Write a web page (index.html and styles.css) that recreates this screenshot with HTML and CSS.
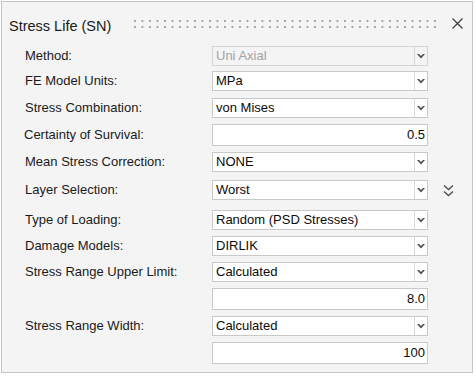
FILE: index.html
```html
<!DOCTYPE html>
<html>
<head>
<meta charset="utf-8">
<link rel="stylesheet" href="styles.css">
</head>
<body>
<div class="panel">
  <div class="header">
    <span class="title">Stress Life (SN)</span>
    <svg class="grip" width="302" height="8" viewBox="0 0 302 8">
      <defs>
        <pattern id="dots" x="0" y="0" width="7.5" height="6" patternUnits="userSpaceOnUse">
          <rect x="0" y="0" width="2" height="2" fill="#a4a4a4"/>
        </pattern>
      </defs>
      <rect x="0" y="0" width="302" height="8" fill="url(#dots)"/>
    </svg>
    <svg class="close" width="11" height="11" viewBox="0 0 11 11">
      <path d="M0.5 0.5 L10.5 10.5 M10.5 0.5 L0.5 10.5" stroke="#3c3c3c" stroke-width="1.2" fill="none"/>
    </svg>
  </div>

  <div class="form">
    <div class="row">
      <span class="label">Method:</span>
      <div class="combo disabled"><span class="val">Uni Axial</span><span class="btn"><svg width="8" height="5" viewBox="0 0 8 5"><path d="M0 0 L2 0 L4 2 L6 0 L8 0 L4 4.5 Z" fill="#4a4a4a"/></svg></span></div>
    </div>
    <div class="row g5">
      <span class="label">FE Model Units:</span>
      <div class="combo"><span class="val">MPa</span><span class="btn"><svg width="8" height="5" viewBox="0 0 8 5"><path d="M0 0 L2 0 L4 2 L6 0 L8 0 L4 4.5 Z" fill="#4a4a4a"/></svg></span></div>
    </div>
    <div class="row g7">
      <span class="label">Stress Combination:</span>
      <div class="combo"><span class="val">von Mises</span><span class="btn"><svg width="8" height="5" viewBox="0 0 8 5"><path d="M0 0 L2 0 L4 2 L6 0 L8 0 L4 4.5 Z" fill="#4a4a4a"/></svg></span></div>
    </div>
    <div class="row tall">
      <span class="label shift">Certainty of Survival:</span>
      <div class="input">0.5</div>
    </div>
    <div class="row">
      <span class="label">Mean Stress Correction:</span>
      <div class="combo"><span class="val">NONE</span><span class="btn"><svg width="8" height="5" viewBox="0 0 8 5"><path d="M0 0 L2 0 L4 2 L6 0 L8 0 L4 4.5 Z" fill="#4a4a4a"/></svg></span></div>
    </div>
    <div class="row g8">
      <span class="label">Layer Selection:</span>
      <div class="combo"><span class="val">Worst</span><span class="btn"><svg width="8" height="5" viewBox="0 0 8 5"><path d="M0 0 L2 0 L4 2 L6 0 L8 0 L4 4.5 Z" fill="#4a4a4a"/></svg></span></div>
      <svg class="expand" width="11" height="13" viewBox="0 0 11 13">
        <path d="M1 1.5 L5.5 5.5 L10 1.5 M1 7.5 L5.5 11.5 L10 7.5" stroke="#505050" stroke-width="1.4" fill="none"/>
      </svg>
    </div>
    <div class="row g10">
      <span class="label">Type of Loading:</span>
      <div class="combo"><span class="val">Random (PSD Stresses)</span><span class="btn"><svg width="8" height="5" viewBox="0 0 8 5"><path d="M0 0 L2 0 L4 2 L6 0 L8 0 L4 4.5 Z" fill="#4a4a4a"/></svg></span></div>
    </div>
    <div class="row">
      <span class="label">Damage Models:</span>
      <div class="combo"><span class="val">DIRLIK</span><span class="btn"><svg width="8" height="5" viewBox="0 0 8 5"><path d="M0 0 L2 0 L4 2 L6 0 L8 0 L4 4.5 Z" fill="#4a4a4a"/></svg></span></div>
    </div>
    <div class="row">
      <span class="label">Stress Range Upper Limit:</span>
      <div class="combo"><span class="val">Calculated</span><span class="btn"><svg width="8" height="5" viewBox="0 0 8 5"><path d="M0 0 L2 0 L4 2 L6 0 L8 0 L4 4.5 Z" fill="#4a4a4a"/></svg></span></div>
    </div>
    <div class="row tall">
      <span class="label"></span>
      <div class="input">8.0</div>
    </div>
    <div class="row">
      <span class="label">Stress Range Width:</span>
      <div class="combo"><span class="val">Calculated</span><span class="btn"><svg width="8" height="5" viewBox="0 0 8 5"><path d="M0 0 L2 0 L4 2 L6 0 L8 0 L4 4.5 Z" fill="#4a4a4a"/></svg></span></div>
    </div>
    <div class="row tall">
      <span class="label"></span>
      <div class="input">100</div>
    </div>
  </div>
</div>
</body>
</html>
```

FILE: styles.css
```css
html, body {
  margin: 0;
  padding: 0;
  background: #ffffff;
}

body {
  font-family: "Liberation Sans", Arial, sans-serif;
  color: #1f1f1f;
}

.panel {
  margin: 1px 0 0 1px;
  width: 470px;
  height: 370px;
  border: 1px solid #c6c6c6;
  background: #f4f4f4;
}

.header {
  display: flex;
  align-items: flex-start;
  height: 18px;
  margin-top: 15px;
  padding-left: 7px;
}

.title {
  flex: 0 0 125px;
  font-size: 14.5px;
  line-height: 18px;
  color: #1a1a1a;
}

.grip {
  display: block;
  margin-top: 3px;
  shape-rendering: crispEdges;
}

.close {
  display: block;
  margin-left: 16px;
  margin-top: 1px;
}

.form {
  margin-top: 11px;
  display: flex;
  flex-direction: column;
  gap: 6px;
  padding-left: 23px;
}

.row {
  display: flex;
  align-items: center;
  height: 20px;
}

.row.tall {
  height: 22px;
}

.row.g5 { margin-top: -1px; }
.row.g7 { margin-top: 1px; }
.row.g8 { margin-top: 2px; }
.row.g10 { margin-top: 4px; }

.label {
  flex: 0 0 187px;
  font-size: 13px;
  line-height: 16px;
  color: #1a1a1a;
}

.label.shift {
  margin-left: -1px;
  flex-basis: 188px;
}

.combo {
  box-sizing: border-box;
  width: 216px;
  height: 20px;
  border: 1px solid #c9c9c9;
  background: #ffffff;
  display: flex;
}

.combo .val {
  flex: 1;
  padding-left: 3px;
  font-size: 13px;
  line-height: 18px;
  color: #0a0a0a;
  white-space: nowrap;
}

.combo .btn {
  width: 12px;
  border-left: 1px solid #d9d9d9;
  display: flex;
  align-items: center;
  justify-content: center;
}

.combo.disabled {
  background: #f4f4f4;
  border-color: #d4d4d4;
}

.combo.disabled .val {
  color: #a2a2a2;
}

.input {
  box-sizing: border-box;
  width: 216px;
  height: 22px;
  border: 1px solid #c9c9c9;
  background: #ffffff;
  font-size: 13px;
  line-height: 20px;
  text-align: right;
  padding-right: 2px;
  color: #0a0a0a;
}

.expand {
  display: block;
  margin-left: 15px;
}
```
